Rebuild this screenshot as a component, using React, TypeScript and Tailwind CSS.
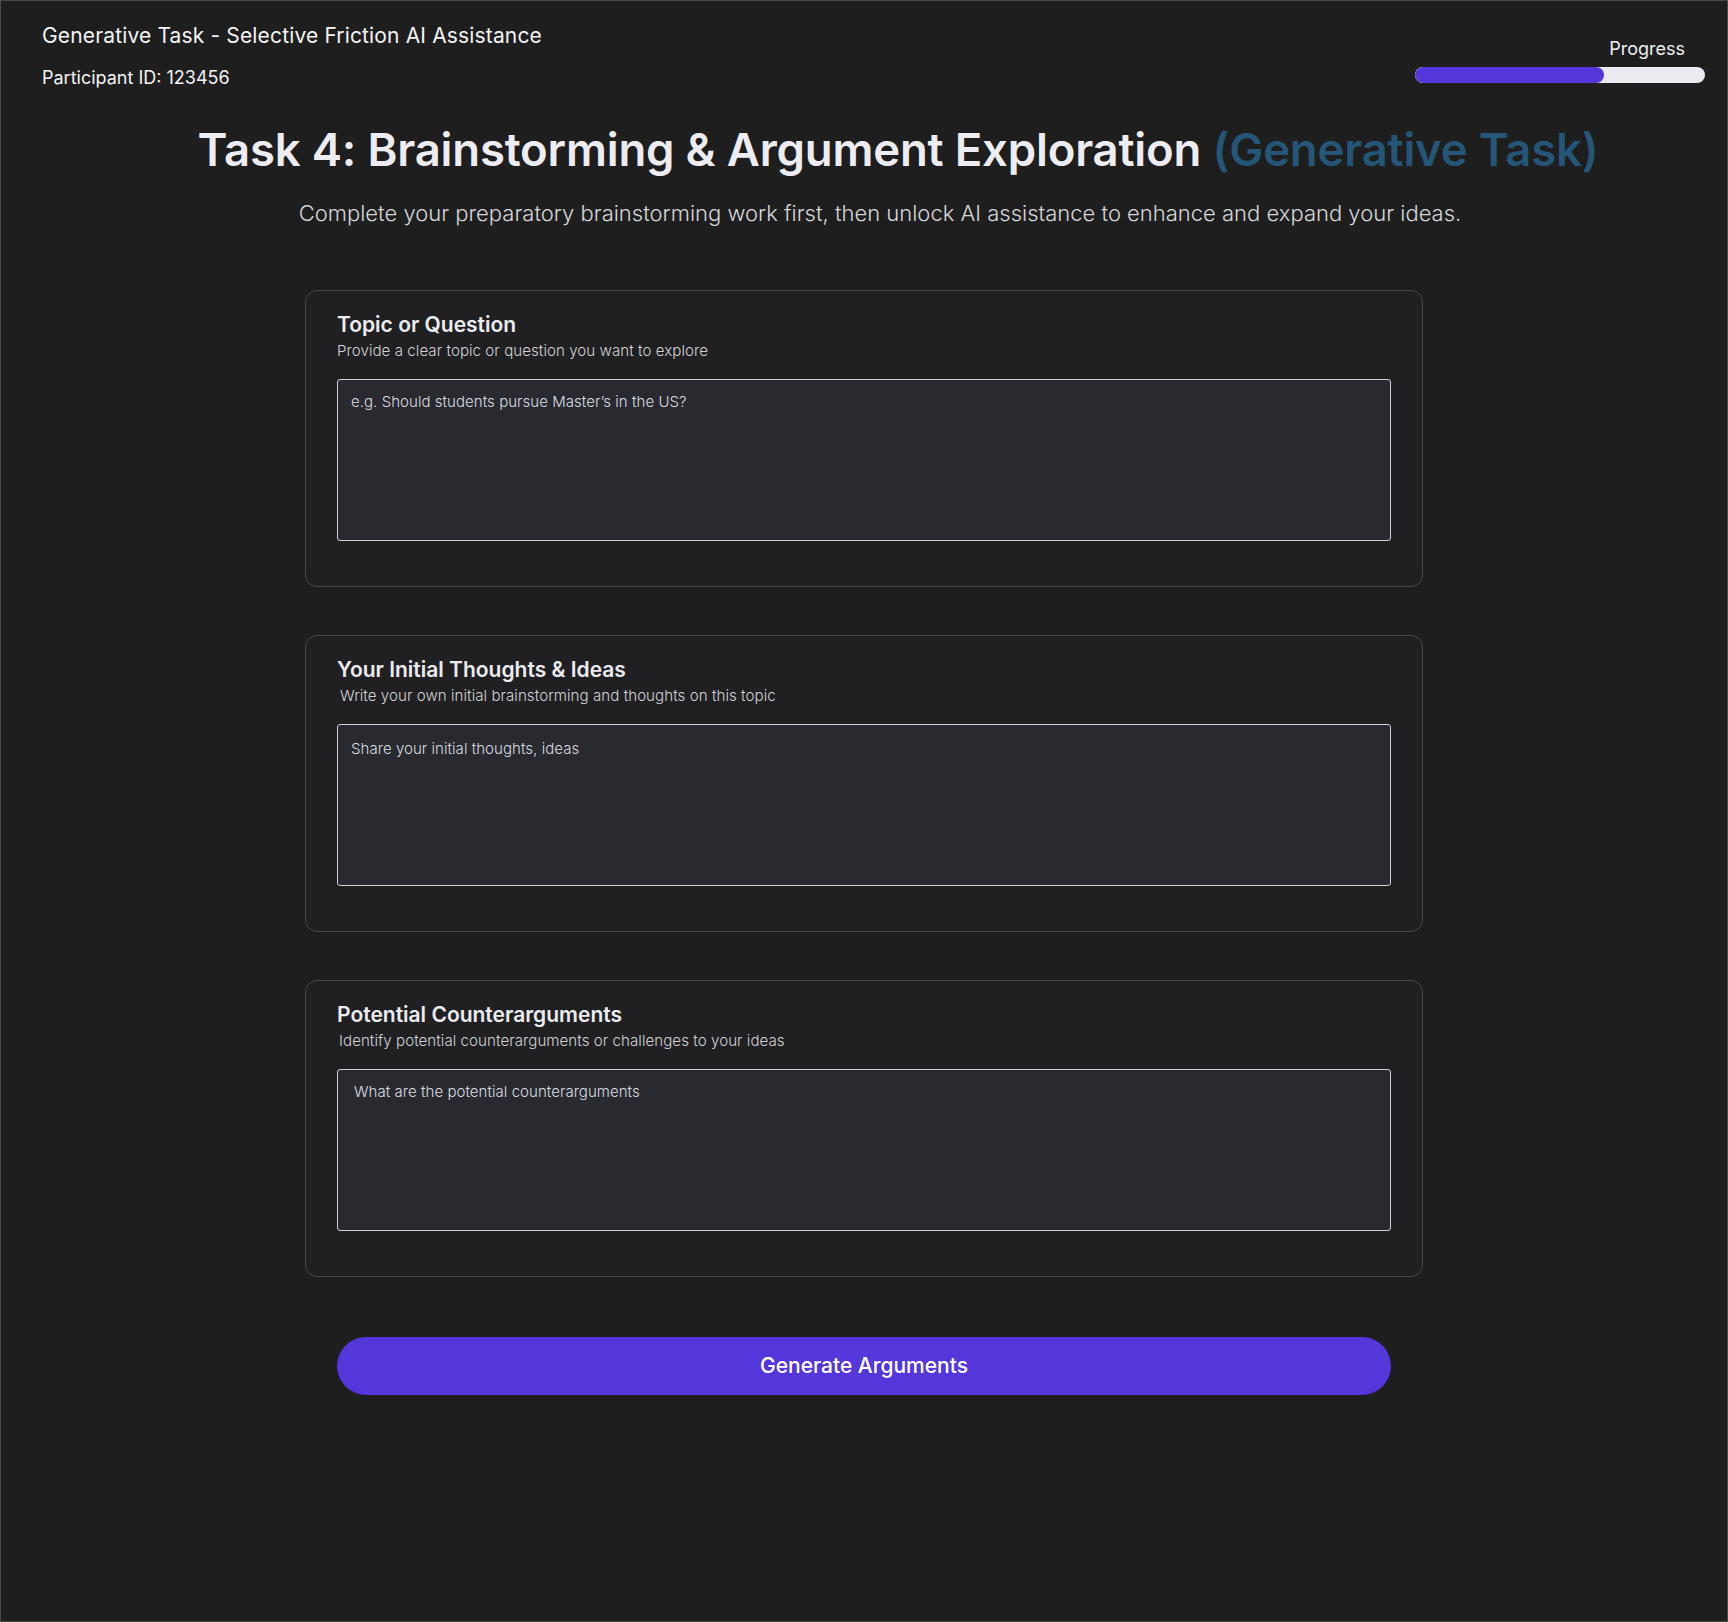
import React from "react";

type CardProps = {
  title: string;
  desc: string;
  placeholder: string;
  descClass: string;
  areaClass: string;
};

function Card({ title, desc, placeholder, descClass, areaClass }: CardProps) {
  return (
    <section className="w-[1118px] rounded-xl border border-[#48484b] bg-[#202022] px-[31px] pt-[20px] pb-[45px]">
      <h2 className="text-[21px] leading-[28px] font-semibold text-[#ececf0]">{title}</h2>
      <p className={`mt-[2px] text-[15.1px] leading-[20px] font-light tracking-[0.05px] text-[#d2d2d6] ${descClass}`}>{desc}</p>
      <textarea
        placeholder={placeholder}
        className={`mt-[18px] block h-[162px] w-full resize-none rounded-[3px] border border-[#cfcfd4] bg-[#282a30] px-[13px] text-[15px] leading-[20px] font-light tracking-[0.05px] text-[#e4e4e8] placeholder:text-[#dcdce0] outline-none ${areaClass}`}
      />
    </section>
  );
}

export default function App() {
  return (
    <div className="min-h-screen border border-[#4a4a4c] bg-[#1e1e1e] font-['Inter',sans-serif] text-[#f0f0f4]">
      <header className="flex items-start justify-between pl-[41px] pr-[22px] pt-[21px]">
        <div className="flex flex-col">
          <div className="text-[21px] leading-[28px] font-normal tracking-[0.15px] text-[#f4f4f6]">
            Generative Task - Selective Friction AI Assistance
          </div>
          <div className="mt-[14px] text-[18px] leading-[28px] font-normal text-[#f4f4f6]">
            Participant ID: 123456
          </div>
        </div>
        <div className="flex w-[290px] flex-col items-end pt-[13px]">
          <span className="mr-[20px] text-[18px] leading-[28px] text-[#f0f0f2]">Progress</span>
          <div className="mt-[4px] h-4 w-full overflow-hidden rounded-full bg-[#ebeaf0]">
            <div className="h-full rounded-full bg-[#5436da]" style={{ width: "65%" }} />
          </div>
        </div>
      </header>

      <main className="flex flex-col items-center">
        <h1 className="mt-[31px] pl-[68px] text-center text-[45.5px] leading-[54px] font-semibold tracking-[-0.2px] text-[#ececf1]">
          Task 4: Brainstorming &amp; Argument Exploration{" "}
          <span className="text-[#255577]">(Generative Task)</span>
        </h1>
        <p className="mt-[22px] pl-[32px] text-center text-[22px] leading-[28px] font-light text-[#d6d6da]">
          Complete your preparatory brainstorming work first, then unlock AI assistance to enhance and expand your ideas.
        </p>

        <div className="mt-[63px] flex flex-col gap-[48px]">
          <Card
            title="Topic or Question"
            desc="Provide a clear topic or question you want to explore"
            placeholder="e.g. Should students pursue Master’s in the US?"
            descClass=""
            areaClass="pt-[12px]"
          />
          <Card
            title="Your Initial Thoughts & Ideas"
            desc="Write your own initial brainstorming and thoughts on this topic"
            placeholder="Share your initial thoughts, ideas"
            descClass="ml-[3px]"
            areaClass="pt-[14px]"
          />
          <Card
            title="Potential Counterarguments"
            desc="Identify potential counterarguments or challenges to your ideas"
            placeholder="What are the potential counterarguments"
            descClass="ml-[2px]"
            areaClass="pt-[12px] pl-[16px]"
          />
        </div>

        <button className="mt-[60px] mb-[200px] h-[58px] w-[1054px] rounded-full bg-[#5436da] text-[21px] font-medium text-white">
          Generate Arguments
        </button>
      </main>
    </div>
  );
}
